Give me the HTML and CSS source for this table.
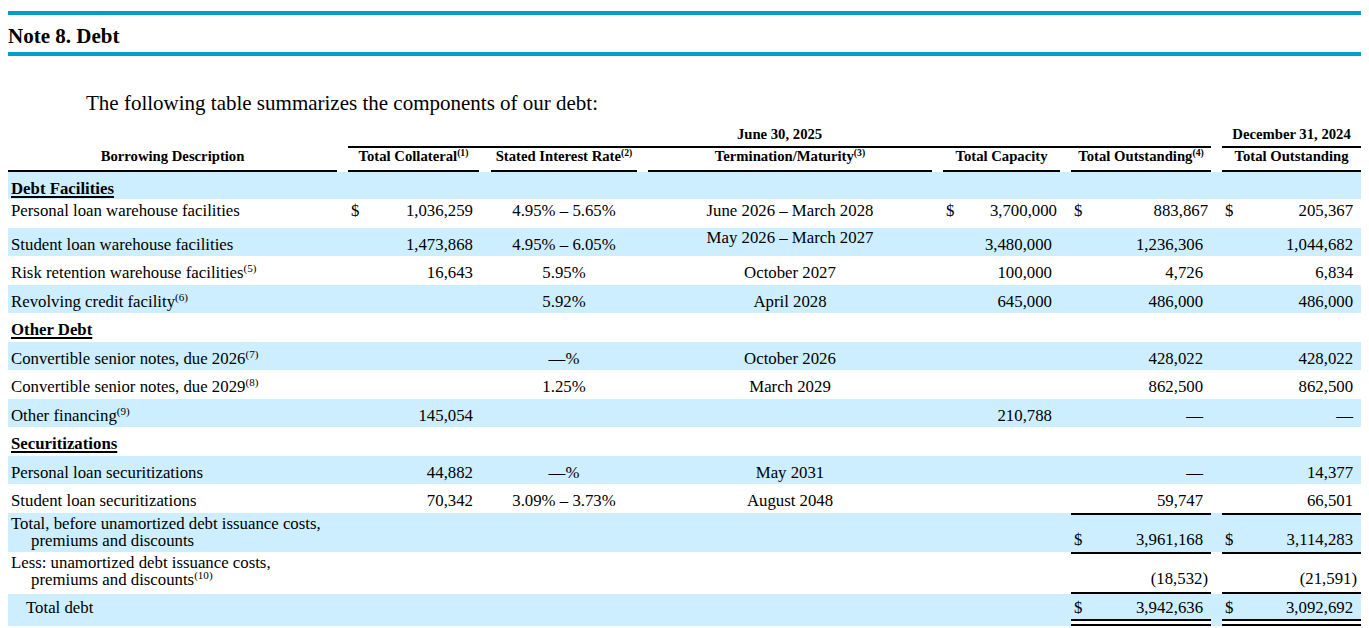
FILE: index.html
```html
<!DOCTYPE html>
<html lang="en">
<head>
<meta charset="utf-8">
<title>Note 8. Debt</title>
<link rel="stylesheet" href="styles.css">
</head>
<body>
<div class="note-head"><h1>Note 8. Debt</h1></div>
<p class="intro">The following table summarizes the components of our debt:</p>
<table class="debt">
<colgroup>
<col class="w-desc"><col class="w-gap"><col class="w-coll"><col class="w-gap2"><col class="w-rate"><col class="w-gap"><col class="w-term"><col class="w-gap"><col class="w-cap"><col class="w-gap"><col class="w-out"><col class="w-gap"><col class="w-dec">
</colgroup>
<thead>
<tr class="hr1">
<th colspan="2"></th>
<th colspan="9" class="ul">June 30, 2025</th>
<th></th>
<th class="ul">December 31, 2024</th>
</tr>
<tr class="hr2">
<th class="ul">Borrowing Description</th><th></th>
<th class="ul">Total Collateral<sup>(1)</sup></th><th></th>
<th class="ul">Stated Interest Rate<sup>(2)</sup></th><th></th>
<th class="ul">Termination/Maturity<sup>(3)</sup></th><th></th>
<th class="ul">Total Capacity</th><th></th>
<th class="ul">Total Outstanding<sup>(4)</sup></th><th></th>
<th class="ul">Total Outstanding</th>
</tr>
</thead>
<tbody>
<tr class="band first-sec"><td class="d sec"><span>Debt Facilities</span></td><td colspan="12"></td></tr>
<tr class="top-row">
<td class="d">Personal loan warehouse facilities</td><td></td>
<td class="n c2"><span class="cur">$</span>1,036,259</td><td></td>
<td class="c">4.95% – 5.65%</td><td></td>
<td class="c">June 2026 – March 2028</td><td></td>
<td class="n shift"><span class="cur">$</span>3,700,000</td><td></td>
<td class="n shift"><span class="cur">$</span>883,867</td><td></td>
<td class="n"><span class="cur">$</span>205,367</td>
</tr>
<tr class="band">
<td class="d">Student loan warehouse facilities</td><td></td>
<td class="n c2">1,473,868</td><td></td>
<td class="c">4.95% – 6.05%</td><td></td>
<td class="c hi">May 2026 – March 2027</td><td></td>
<td class="n">3,480,000</td><td></td>
<td class="n">1,236,306</td><td></td>
<td class="n">1,044,682</td>
</tr>
<tr>
<td class="d">Risk retention warehouse facilities<sup>(5)</sup></td><td></td>
<td class="n c2">16,643</td><td></td>
<td class="c">5.95%</td><td></td>
<td class="c">October 2027</td><td></td>
<td class="n">100,000</td><td></td>
<td class="n">4,726</td><td></td>
<td class="n">6,834</td>
</tr>
<tr class="band">
<td class="d">Revolving credit facility<sup>(6)</sup></td><td></td>
<td class="n c2"></td><td></td>
<td class="c">5.92%</td><td></td>
<td class="c">April 2028</td><td></td>
<td class="n">645,000</td><td></td>
<td class="n">486,000</td><td></td>
<td class="n">486,000</td>
</tr>
<tr><td class="d sec"><span>Other Debt</span></td><td colspan="12"></td></tr>
<tr class="band">
<td class="d">Convertible senior notes, due 2026<sup>(7)</sup></td><td></td>
<td class="n c2"></td><td></td>
<td class="c">—%</td><td></td>
<td class="c">October 2026</td><td></td>
<td class="n"></td><td></td>
<td class="n">428,022</td><td></td>
<td class="n">428,022</td>
</tr>
<tr>
<td class="d">Convertible senior notes, due 2029<sup>(8)</sup></td><td></td>
<td class="n c2"></td><td></td>
<td class="c">1.25%</td><td></td>
<td class="c">March 2029</td><td></td>
<td class="n"></td><td></td>
<td class="n">862,500</td><td></td>
<td class="n">862,500</td>
</tr>
<tr class="band">
<td class="d">Other financing<sup>(9)</sup></td><td></td>
<td class="n c2">145,054</td><td></td>
<td class="c"></td><td></td>
<td class="c"></td><td></td>
<td class="n">210,788</td><td></td>
<td class="n">—</td><td></td>
<td class="n">—</td>
</tr>
<tr><td class="d sec"><span>Securitizations</span></td><td colspan="12"></td></tr>
<tr class="band">
<td class="d">Personal loan securitizations</td><td></td>
<td class="n c2">44,882</td><td></td>
<td class="c">—%</td><td></td>
<td class="c">May 2031</td><td></td>
<td class="n"></td><td></td>
<td class="n">—</td><td></td>
<td class="n">14,377</td>
</tr>
<tr>
<td class="d">Student loan securitizations</td><td></td>
<td class="n c2">70,342</td><td></td>
<td class="c">3.09% – 3.73%</td><td></td>
<td class="c">August 2048</td><td></td>
<td class="n"></td><td></td>
<td class="n">59,747</td><td></td>
<td class="n">66,501</td>
</tr>
<tr class="band sum1">
<td class="d two">Total, before unamortized debt issuance costs,<br>premiums and discounts</td><td colspan="9"></td>
<td class="n tot bt"><span class="cur">$</span>3,961,168</td><td></td>
<td class="n tot bt"><span class="cur">$</span>3,114,283</td>
</tr>
<tr class="sum2">
<td class="d two">Less: unamortized debt issuance costs,<br>premiums and discounts<sup>(10)</sup></td><td colspan="9"></td>
<td class="n tot bt bb neg">(18,532)</td><td></td>
<td class="n tot bt bb neg">(21,591)</td>
</tr>
<tr class="band sum3">
<td class="d ind">Total debt</td><td colspan="9"></td>
<td class="n tot dbl"><span class="cur">$</span>3,942,636</td><td></td>
<td class="n tot dbl"><span class="cur">$</span>3,092,692</td>
</tr>
</tbody>
</table>
</body>
</html>
```

FILE: styles.css
```css
html, body {
  background: #ffffff;
}
body {
  margin: 8px;
  font-family: "Liberation Serif", "Times New Roman", serif;
  color: #000000;
}

.note-head {
  margin-top: 3px;
  border-top: 4px solid #009fc6;
  border-bottom: 4px solid #009fc6;
  padding: 9px 0 4px;
}
.note-head h1 {
  margin: 0;
  font-size: 21px;
  line-height: 24px;
  font-weight: bold;
}

.intro {
  margin: 35px 0 11px 78px;
  font-size: 21px;
  line-height: 24px;
}

table.debt {
  width: 1353px;
  table-layout: fixed;
  border-collapse: separate;
  border-spacing: 0;
  font-size: 16.8px;
}
.w-desc { width: 329px; }
.w-gap { width: 11px; }
.w-gap2 { width: 12px; }
.w-coll { width: 131px; }
.w-rate { width: 146px; }
.w-term { width: 284px; }
.w-cap { width: 117px; }
.w-out { width: 140px; }
.w-dec { width: 139px; }

table.debt th {
  font-size: 14.7px;
  line-height: 17px;
  font-weight: bold;
  text-align: center;
  vertical-align: bottom;
  padding: 0;
  white-space: nowrap;
}
table.debt .hr1 th { padding-bottom: 3px; }
table.debt .hr2 th { padding-bottom: 5px; }
table.debt th.ul { border-bottom: 2px solid #000; }

sup {
  font-size: 0.66em;
  line-height: 0;
  vertical-align: 0.5em;
}

tbody tr { height: 28.5px; }
tbody tr.first-sec { height: 27px; }
tbody tr.band { background: #cceeff; }

table.debt td {
  padding: 6px 0 0;
  vertical-align: middle;
  white-space: nowrap;
}
table.debt td.d { padding-left: 3px; }
td.sec span {
  font-weight: bold;
  text-decoration: underline;
  text-decoration-thickness: 2px;
  text-underline-offset: 2px;
}
td.c { text-align: center; }
table.debt td.n {
  text-align: right;
  padding-right: 8px;
  padding-left: 3px;
}
table.debt td.n.c2 { padding-right: 6px; }
table.debt td.n.shift { padding-right: 3px; }
.cur { float: left; }

table.debt tr.top-row td { vertical-align: top; padding-top: 2px; }
table.debt td.hi { vertical-align: top; padding-top: 0; }

tbody tr.sum1 { height: 39px; }
tbody tr.sum2 { height: 42px; }
tbody tr.sum3 { height: 32px; }

table.debt td.two {
  vertical-align: top;
  line-height: 17px;
  padding-top: 2px;
  padding-left: 23px;
  text-indent: -20px;
}
table.debt td.tot {
  line-height: 17px;
  vertical-align: bottom;
  padding-top: 0;
}
table.debt tr.sum1 td.tot { padding-bottom: 4px; }
table.debt tr.sum2 td.tot { padding-bottom: 5px; }
table.debt td.bt { border-top: 2px solid #000; }
table.debt td.bb { border-bottom: 2px solid #000; }
table.debt td.n.neg { padding-right: 3px; }
table.debt tr.sum2 td.n.neg:last-child { padding-right: 4px; }

table.debt tr.sum3 { background: transparent; }
table.debt tr.sum3 td {
  vertical-align: top;
  line-height: 17px;
  padding-top: 5px;
  background: #cceeff;
}
table.debt tr.sum3 td.ind { padding-left: 18px; }
table.debt tr.sum3 td.dbl {
  border-bottom: 7px double #000;
  background-clip: padding-box;
}
```
